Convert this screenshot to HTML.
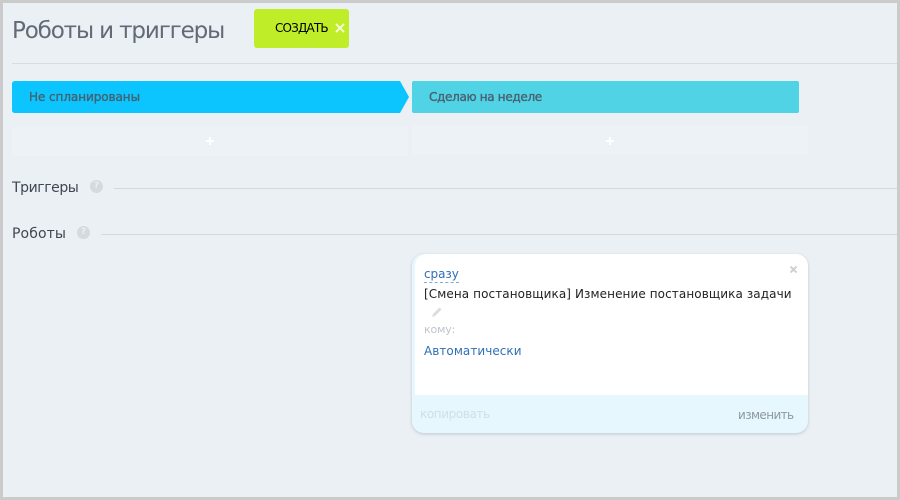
<!DOCTYPE html>
<html lang="ru">
<head>
<meta charset="utf-8">
<style>
html,body{margin:0;padding:0;width:900px;height:500px;overflow:hidden;background:#ebf0f5;}
body{position:relative;font-family:"DejaVu Sans","Liberation Sans",sans-serif;}
div,span{position:absolute;white-space:nowrap;box-sizing:border-box;}
svg{position:absolute;display:block;}
</style>
</head>
<body>
<!-- outer frame -->
<div style="left:0;top:0;width:900px;height:3px;background:#cbcbcb"></div>
<div style="left:0;top:497px;width:900px;height:3px;background:#cbcbcb"></div>
<div style="left:0;top:0;width:3px;height:500px;background:#cbcbcb"></div>
<div style="left:897px;top:0;width:3px;height:500px;background:#cbcbcb"></div>

<!-- header -->
<div style="left:12px;top:15px;font-size:23px;line-height:32px;color:#626a76;letter-spacing:-1.13px">Роботы и триггеры</div>
<div style="left:254px;top:9px;width:95px;height:39px;background:#bfee28;border-radius:3px"></div>
<div style="left:275px;top:20px;font-size:12px;line-height:17px;color:#000;letter-spacing:-.85px">СОЗДАТЬ</div>
<svg style="left:335px;top:23px" width="10" height="10" viewBox="0 0 10 10"><path d="M1 1L9 9M9 1L1 9" stroke="#f2fbd0" stroke-width="2"/></svg>
<div style="left:12px;top:63px;width:885px;height:1px;background:#d8dbdf"></div>

<!-- columns -->
<svg style="left:12px;top:81px" width="398" height="32" viewBox="0 0 398 32"><path d="M3 0H388L397 16L388 32H3Q0 32 0 29V3Q0 0 3 0Z" fill="#0cc5fe"/></svg>
<div style="left:29px;top:89px;font-size:12px;line-height:17px;color:#46606f;letter-spacing:-.07px;-webkit-text-stroke:.35px #46606f">Не спланированы</div>
<div style="left:412px;top:81px;width:387px;height:32px;background:#4fd3e5;border-radius:2px"></div>
<div style="left:429px;top:89px;font-size:12px;line-height:17px;color:#4a5f70;letter-spacing:-.32px;-webkit-text-stroke:.35px #4a5f70">Сделаю на неделе</div>

<div style="left:12px;top:127px;width:396px;height:29px;background:#edf2f6;border-radius:2px"></div>
<div style="left:412px;top:125px;width:396px;height:30px;background:#edf2f6;border-radius:2px"></div>
<svg style="left:206px;top:137px" width="8" height="8" viewBox="0 0 8 8"><path d="M4 0V8M0 4H8" stroke="#fff" stroke-width="2"/></svg>
<svg style="left:606px;top:137px" width="8" height="8" viewBox="0 0 8 8"><path d="M4 0V8M0 4H8" stroke="#fff" stroke-width="2"/></svg>

<!-- triggers -->
<div style="left:12px;top:179px;font-size:14px;line-height:18px;color:#3f4750;letter-spacing:-.42px">Триггеры</div>
<div style="left:90px;top:180px;width:13px;height:13px;border-radius:50%;background:#d5dade;color:#ebf0f5;font-size:9px;line-height:13px;text-align:center;font-weight:bold">?</div>
<div style="left:114px;top:188px;width:783px;height:1px;background:#d6d9dc"></div>

<!-- robots -->
<div style="left:12px;top:225px;font-size:14px;line-height:18px;color:#3f4750;letter-spacing:.1px">Роботы</div>
<div style="left:77px;top:226px;width:13px;height:13px;border-radius:50%;background:#d5dade;color:#ebf0f5;font-size:9px;line-height:13px;text-align:center;font-weight:bold">?</div>
<div style="left:101px;top:234px;width:796px;height:1px;background:#d6d9dc"></div>

<!-- card -->
<div style="left:412px;top:254px;width:396px;height:179px;background:#e6f7fe;border-radius:12px;box-shadow:0 1px 3px rgba(83,92,105,.28)"></div>
<div style="left:415px;top:254px;width:393px;height:141px;background:#fff;border-radius:12px 12px 0 0"></div>
<div style="left:424px;top:266px;font-size:12px;line-height:17px;color:#2f6fb5;letter-spacing:-.05px;border-bottom:1px dashed #7fa9d8;height:17px">сразу</div>
<svg style="left:790px;top:266px" width="7" height="7" viewBox="0 0 7 7"><path d="M.5 .5L6.5 6.5M6.5 .5L.5 6.5" stroke="#cfcfcf" stroke-width="1.9"/></svg>
<div style="left:424px;top:286px;font-size:12px;line-height:17px;color:#222;letter-spacing:.09px">[Смена постановщика] Изменение постановщика задачи</div>
<svg style="left:431px;top:306px" width="12" height="12" viewBox="0 0 12 12"><path d="M1 11L2 8L8.5 1.5L10.5 3.5L4 10Z" fill="#dcdcdc"/></svg>
<div style="left:424px;top:322px;font-size:11px;line-height:16px;color:#bfc5ce;letter-spacing:-.15px">кому:</div>
<div style="left:424px;top:343px;font-size:12px;line-height:17px;color:#2f6fb5;letter-spacing:.05px">Автоматически</div>
<div style="left:420px;top:406px;font-size:12px;line-height:17px;color:#cfe0e8;letter-spacing:-.4px">копировать</div>
<div style="left:738px;top:407px;font-size:12px;line-height:17px;color:#8f989f;letter-spacing:-.6px">изменить</div>
</body>
</html>
